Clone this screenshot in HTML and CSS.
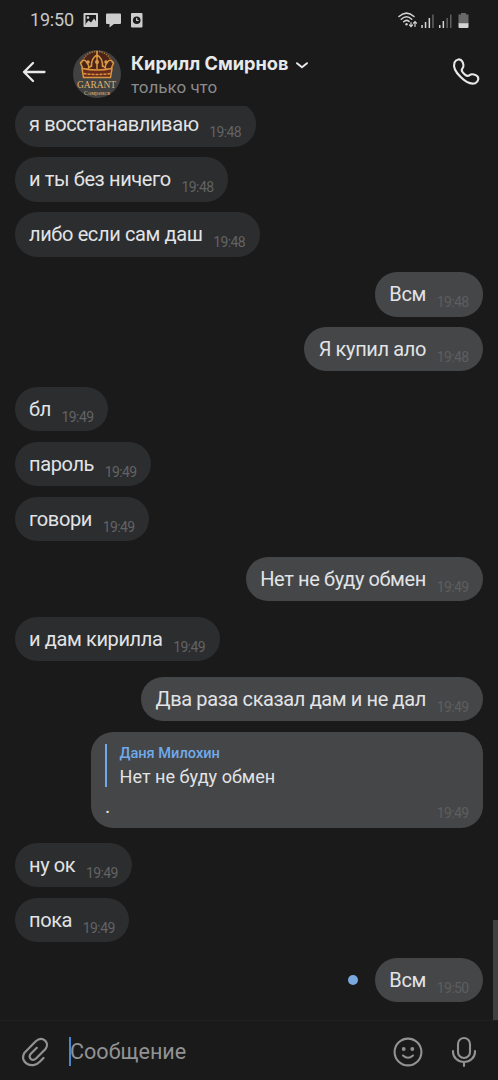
FILE: index.html
```html
<!DOCTYPE html>
<html lang="ru">
<head>
<meta charset="utf-8">
<title>Кирилл Смирнов</title>
<link rel="stylesheet" href="styles.css">
</head>
<body>
<div class="app">
  <div class="status">
    <span class="clock">19:50</span>
    <svg class="notices" width="62" height="18" viewBox="0 0 62 18">
      <g fill="#cdcdcd">
        <path fill-rule="evenodd" d="M1.500 2h12.500q1 0 1 1v12q0 1-1 1H1.500q-1 0-1-1V3q0-1 1-1zM2.500 4v10h10.500V4z"/>
        <path d="M2.500 13l3-3.500 2.500 2 3-4 2.200 3V14H2.500z"/>
        <circle cx="5" cy="6.600" r="1.300"/>
        <path d="M24 2.500h13q1 0 1 1V12q0 1-1 1h-6l-4.500 3.500V13H24q-1 0-1-1V3.500q0-1 1-1z"/>
        <rect x="48" y="2" width="11.500" height="14.500" rx="1"/>
      </g>
      <circle cx="53.700" cy="9.300" r="3.800" fill="#1a1a1a"/>
      <path d="M53.700 7v2.500h2" fill="none" stroke="#cdcdcd" stroke-width="1.200"/>
    </svg>
    <svg class="signals" width="72" height="18" viewBox="0 0 72 18">
      <g fill="none" stroke="#d4d4d4" stroke-width="1.500" stroke-linecap="round">
        <path d="M1 5.500Q8.500-1.200 16 5.500M3.300 8.200Q8.500 3.400 13.700 8.200M5.700 10.700Q8.500 8.200 11 10.400"/>
        <path stroke-width="1.200" d="M13 11.500v4M11.500 14l1.500 1.600 1.500-1.600M17 15.500v-5M15.500 12.200l1.500-1.600 1.500 1.600"/>
      </g>
      <circle cx="8.500" cy="13.300" r="1.200" fill="#d4d4d4"/>
      <g fill="#d4d4d4">
        <path d="M23.300 14h1.500v3h-1.500zM26.800 11h1.500v6h-1.500zM30.600 7h1.500v10h-1.500zM41 14h1.500v3H41zM44.600 10h1.500v7h-1.500z"/>
        <path fill="#606060" d="M34.200 3.500h1.500V17h-1.500zM48.400 7h1.500v10h-1.500zM52 3.500h1.500V17H52z"/>
        <path fill="#686868" d="M60.500 3.500h2.500v-1.500h5v1.500h2.500V13h-10z"/>
        <path d="M60.500 12.300h10V16q0 1-1 1h-8q-1 0-1-1z"/>
      </g>
    </svg>
  </div>
  <header class="header">
    <svg class="back" width="24" height="22" viewBox="0 0 24 22"><path d="M22.500 11H2M11 2L2 11l9 9" fill="none" stroke="#e7e8ea" stroke-width="2.300" stroke-linecap="round" stroke-linejoin="round"/></svg>
    <svg class="avatar" width="48" height="48" viewBox="0 0 48 48">
      <circle cx="24" cy="24" r="24" fill="#414142"/>
      <path d="M8 14Q10 2 24 1.500T40 14l-2 12H10z" fill="#4a2419"/>
      <path d="M8.500 13Q13 1.500 24 1.500T39.500 13" fill="none" stroke="#a2753c" stroke-width="1.500" stroke-dasharray="1.500 1"/>
      <g fill="none" stroke="#d9963f" stroke-width="1.500">
        <path d="M10 19L7.500 13q3-5 6-1t2 6q4-2 3-6M38 19l2.500-6q-3-5-6-1t-2 6q-4-2-3-6M24 19V5M18.500 17Q18 8 24 5q6 3 5.500 12"/>
        <path fill="#6a2a1c" d="M9 18.500Q24 21.500 39 18.500L37.500 27.500H10.500z"/>
        <path d="M10.500 23.500Q24 25.500 37.500 23.500" stroke-dasharray="3 1"/>
      </g>
      <g fill="#d99b4a"><circle cx="15" cy="12" r="1.800"/><circle cx="33" cy="12" r="1.800"/><circle cx="24" cy="12" r="2"/><path d="M23.200 1h1.600v5h-1.600z"/></g>
      <text class="crest" x="23.500" y="37.500" text-anchor="middle" textLength="39">GARANT</text>
      <text class="crest crest-sub" x="24" y="45" text-anchor="middle" textLength="26">Сомренсв</text>
    </svg>
    <div class="who">
      <div class="name"><span>Кирилл Смирнов</span><svg width="14" height="9" viewBox="0 0 14 9"><path d="M2 2.200l5 4 5-4" fill="none" stroke="#e7e8ea" stroke-width="2" stroke-linecap="round" stroke-linejoin="round"/></svg></div>
      <div class="seen">только что</div>
    </div>
    <svg class="call" width="30" height="30" viewBox="0 0 30 30"><path d="M3.500 5.500C5 2 9.500 1.200 11.300 4.500c1.200 2.400 2 4.600.3 6.600-1.400 1.600-1.300 2.600.2 4.300l2.500 2.500c1.700 1.500 2.700 1.600 4.300.2 2-1.700 4.200-.9 6.600.3 3.300 1.800 2.500 6.300-1 7.800C16 29 .5 14 3.500 5.500z" fill="none" stroke="#e7e8ea" stroke-width="2.100" stroke-linejoin="round"/></svg>
  </header>
  <main class="chat">
    <div class="row"><div class="bubble"><span class="text">я восстанавливаю</span><time>19:48</time></div></div>
    <div class="row"><div class="bubble"><span class="text">и ты без ничего</span><time>19:48</time></div></div>
    <div class="row"><div class="bubble"><span class="text">либо если сам даш</span><time>19:48</time></div></div>
    <div class="row out turn"><div class="bubble"><span class="text">Всм</span><time>19:48</time></div></div>
    <div class="row out"><div class="bubble"><span class="text">Я купил ало</span><time>19:48</time></div></div>
    <div class="row turn"><div class="bubble"><span class="text">бл</span><time>19:49</time></div></div>
    <div class="row"><div class="bubble"><span class="text">пароль</span><time>19:49</time></div></div>
    <div class="row"><div class="bubble"><span class="text">говори</span><time>19:49</time></div></div>
    <div class="row out turn"><div class="bubble"><span class="text">Нет не буду обмен</span><time>19:49</time></div></div>
    <div class="row turn"><div class="bubble"><span class="text">и дам кирилла</span><time>19:49</time></div></div>
    <div class="row out turn"><div class="bubble"><span class="text">Два раза сказал дам и не дал</span><time>19:49</time></div></div>
    <div class="row out"><div class="bubble reply">
      <div class="quote"><div class="author">Даня Милохин</div><div class="quoted">Нет не буду обмен</div></div>
      <div class="last"><span class="text">.</span><time>19:49</time></div>
    </div></div>
    <div class="row turn"><div class="bubble"><span class="text">ну ок</span><time>19:49</time></div></div>
    <div class="row"><div class="bubble"><span class="text">пока</span><time>19:49</time></div></div>
    <div class="row out turn"><i class="unread"></i><div class="bubble"><span class="text">Всм</span><time>19:50</time></div></div>
    <div class="scrollbar"></div>
  </main>
  <footer class="composer">
    <svg class="clip" width="28" height="32" viewBox="0 0 28 32"><path d="M22.500 22l-3.700 3.800C11.500 33.500-2 27 3.300 17L14.500 5.500c6.800-6.300 14.800.8 10 7.500l-9.200 9.300c-4.300 4-8.500-.8-5.500-4.500l6-6" fill="none" stroke="#919294" stroke-width="2.200" stroke-linecap="round" stroke-linejoin="round"/></svg>
    <div class="field"><span>Сообщение</span></div>
    <svg class="smile" width="30" height="30" viewBox="0 0 30 30"><circle cx="15" cy="15" r="13.400" fill="none" stroke="#919294" stroke-width="2.100"/><g fill="#919294"><circle cx="10.700" cy="12" r="1.900"/><circle cx="19.300" cy="12" r="1.900"/></g><path d="M10 18.500q5 4.500 10 0" fill="none" stroke="#919294" stroke-width="2.100" stroke-linecap="round"/></svg>
    <svg class="mic" width="26" height="32" viewBox="0 0 26 32"><g fill="none" stroke="#919294" stroke-width="2.100" stroke-linecap="round"><rect x="7" y="2" width="12" height="20" rx="6"/><path d="M2 15v1a11 10 0 0 0 22 0v-1M13 26v4"/></g></svg>
  </footer>
</div>
</body>
</html>
```
FILE: styles.css
```css
body { margin: 0; background: #1a1a1a; font-family: Roboto, "Noto Sans", sans-serif; }
.app { width: 498px; height: 1080px; display: flex; flex-direction: column; overflow: hidden; background: #1a1a1a; }
.status { height: 40px; display: flex; align-items: center; padding: 0 28px 0 30px; box-sizing: border-box; flex: none; }
.clock { font-size: 18px; line-height: 20px; color: #c8c8c8; width: 53px; letter-spacing: -0.2px; }
.signals { margin-left: auto; }
.header { height: 66px; flex: none; box-sizing: border-box; display: flex; align-items: flex-start; padding: 10px 17px 0 22px; }
.back { margin-top: 11px; }
.avatar { margin-left: 27px; }
.crest { font: 9.500px "Liberation Serif", serif; fill: #dcb46e; }
.crest-sub { font-size: 6px; }
.who { margin-left: 10px; flex: 1; }
.name { display: flex; align-items: center; gap: 7px; height: 26px; font: 700 18.200px/26px Inter, sans-serif; color: #e7e8ea; white-space: nowrap; }
.name svg { margin-top: 5px; }
.seen { font-size: 17px; line-height: 22px; color: #8b8b8c; }
.call { margin-top: 7px; }
.chat { position: relative; flex: none; height: 915px; box-sizing: border-box; overflow: hidden; padding: 0 15px 0 14.500px; border-bottom: 1px solid #202020; }
.row { display: flex; align-items: center; margin-top: 10.800px; }
.row:first-child { margin-top: -3.600px; }
.row.turn { margin-top: 15.750px; }
.row.out { justify-content: flex-end; }
.bubble { height: 44.200px; box-sizing: border-box; border-radius: 22px; background: #2c2d2e; display: flex; padding: 0 14.500px; color: #e1e3e6; white-space: nowrap; }
.out .bubble { background: #454647; }
.text { font-size: 20px; line-height: 45px; letter-spacing: -0.380px; }
time { font-size: 14px; line-height: 18px; letter-spacing: -0.600px; color: #626365; margin: 21px 0 0 10.700px; }
.out time { color: #5d5e60; }
.bubble.reply { width: 392.500px; height: 95.500px; flex-direction: column; padding-top: 12px; }
.quote { height: 43px; border-left: 2.500px solid #71aaeb; padding-left: 12.500px; }
.author { font-size: 14.600px; line-height: 19px; font-weight: 500; color: #71aaeb; }
.quoted { font-size: 18.100px; line-height: 27px; }
.last { display: flex; justify-content: space-between; }
.last .text { line-height: 38px; }
.last time { margin-top: 17px; }
.unread { width: 10px; height: 10px; border-radius: 50%; background: #79a7de; margin-right: 17px; }
.scrollbar { position: absolute; right: 0; top: 814px; width: 5px; height: 101px; background: #404040; }
.composer { flex: 1; display: flex; align-items: center; padding: 2px 21px 0 21px; }
.field { margin-left: 20px; border-left: 2px solid #4986cc; height: 29px; line-height: 30px; font-size: 21.600px; color: #919294; flex: 1; }
.field span { margin-left: -1px; }
.mic { margin-left: 28px; }
```
